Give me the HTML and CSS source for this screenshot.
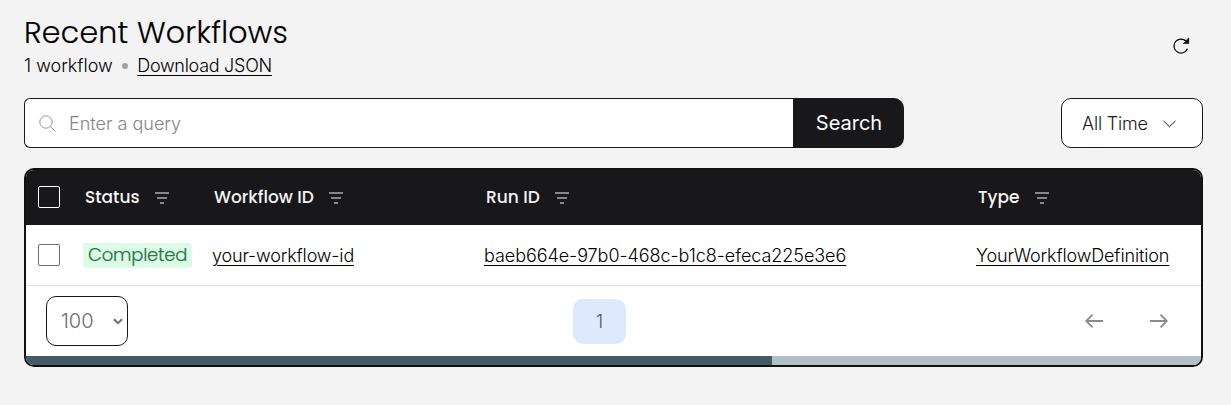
FILE: index.html
```html
<!DOCTYPE html>
<html lang="en">
<head>
<meta charset="utf-8">
<title>Recent Workflows</title>
<link rel="stylesheet" href="styles.css">
</head>
<body>
<svg class="defs" width="0" height="0">
  <symbol id="filter" viewBox="0 0 14 12"><path d="M0 1h14M2 6h10M5 11h4" stroke="currentColor" stroke-width="2"/></symbol>
</svg>
<main class="page">
  <header class="head">
    <div>
      <h1 class="title"><span>Recent Workflows</span></h1>
      <div class="sub"><span class="count">1 workflow</span><i class="dot"></i><a class="link download">Download JSON</a></div>
    </div>
    <button class="refresh" aria-label="Refresh"><svg width="18" height="18" viewBox="0 0 18 18"><path d="M15.4 11.8A7 7 0 1 1 14 4.2" fill="none" stroke="#000" stroke-width="1.2"/><path d="M16.8 1v5.6h-5.6l2.2-2.2-.8-1.2 1.5.2z" fill="#000" stroke="#000" stroke-width=".5"/></svg></button>
  </header>
  <div class="tools">
    <div class="field">
      <svg width="17" height="17" viewBox="0 0 17 17" fill="none" stroke="#96969c" stroke-width="1"><circle cx="7" cy="7" r="6.2"/><path d="M11.4 11.4l5 5"/></svg>
      <span class="placeholder">Enter a query</span>
    </div>
    <button class="search"><span>Search</span></button>
    <button class="time"><span>All Time</span><svg width="13" height="8" viewBox="0 0 13 8"><path d="M.5 1l6 5.7 6-5.7" fill="none" stroke="#18181b" stroke-width="1"/></svg></button>
  </div>
  <section class="table">
    <div class="row thead">
      <i class="box"></i>
      <div class="cell"><span class="status">Status</span><svg class="filter"><use href="#filter"/></svg></div>
      <div class="cell"><span class="wid">Workflow ID</span><svg class="filter"><use href="#filter"/></svg></div>
      <div class="cell"><span class="rid">Run ID</span><svg class="filter"><use href="#filter"/></svg></div>
      <div class="cell"><span class="type">Type</span><svg class="filter"><use href="#filter"/></svg></div>
    </div>
    <div class="row item">
      <i class="box"></i>
      <div class="cell"><span class="badge">Completed</span></div>
      <div class="cell"><a class="link id">your-workflow-id</a></div>
      <div class="cell"><a class="link run">baeb664e-97b0-468c-b1c8-efeca225e3e6</a></div>
      <div class="cell"><a class="link def">YourWorkflowDefinition</a></div>
    </div>
    <div class="foot">
      <div class="size"><span>100</span><svg width="10" height="7" viewBox="0 0 10 7"><path d="M1 1.2l4 4 4-4" fill="none" stroke="#6b6b73" stroke-width="2"/></svg></div>
      <span class="current">1</span>
      <div class="arrows">
        <svg width="18" height="14" viewBox="0 0 18 14"><path d="M18 7H1.2M7.5.7L1.2 7l6.3 6.3" fill="none" stroke="#8a8a8a" stroke-width="1.8"/></svg>
        <svg width="18" height="14" viewBox="0 0 18 14"><path d="M0 7h16.8M10.5.7L16.8 7l-6.3 6.3" fill="none" stroke="#8a8a8a" stroke-width="1.8"/></svg>
      </div>
    </div>
    <div class="track"><div class="thumb"></div></div>
  </section>
</main>
</body>
</html>
```
FILE: styles.css
```css
* { box-sizing: border-box; }
body { margin: 0; background: #f3f3f3; color: #000; font: 300 18px/24px Inter, "Liberation Sans", sans-serif; }
button { margin: 0; padding: 0; border: 0; background: none; font: inherit; color: inherit; }
svg { display: block; flex: none; }
.defs { display: none; }
.page { padding: 14px 28px 0 24px; }
.head { display: flex; justify-content: space-between; height: 84px; }
.title { margin: 0; font: 300 30px/38px Poppins, Inter, sans-serif; letter-spacing: .25px; -webkit-text-stroke: .2px #000; }
.sub { display: flex; align-items: center; height: 28px; }
.dot { width: 6px; height: 6px; margin: 0 10px 0 9px; border-radius: 50%; background: #a0a0a6; }
.link { text-decoration: underline; text-decoration-thickness: 1px; text-underline-offset: 3px; }
.download { margin-left: -.5px; letter-spacing: -.28px; }
.refresh { padding: 23px 13px 0 0; align-self: flex-start; }
.tools { display: flex; height: 50px; }
.field { display: flex; align-items: center; gap: 13px; width: 769px; padding-left: 14px; background: #fff; border: 1px solid #18181b; border-right: 0; border-radius: 6px 0 0 6px; color: #84848e; }
.placeholder { padding-top: 2px; }
.search { width: 111px; padding-left: 1px; background: #18181b; color: #fff; border-radius: 0 10px 10px 0; font-size: 20px; font-weight: 400; }
.time { display: flex; align-items: center; gap: 15px; width: 142px; margin-left: auto; padding: 2px 0 0 20px; background: #fff; border: 1px solid #18181b; border-radius: 10px; color: #18181b; letter-spacing: -.2px; }
.table { height: 199px; margin-top: 20px; border: 2px solid #111; border-radius: 10px; background: #fff; overflow: hidden; }
.row { display: grid; grid-template-columns: 57px 129px 272px 492px 1fr; align-items: center; }
.thead { height: 55px; padding: 0 0 2px 1px; background: #18181b; color: #f4f4f4; font: 500 17px/24px Poppins, Inter, sans-serif; }
.item { height: 61px; border-bottom: 1px solid #e2e2e4; }
.box { width: 22px; height: 22px; margin-left: 12px; border: 1px solid #6b6b73; border-radius: 2px; }
.thead .box { margin-left: 11px; border-color: #fff; }
.thead .cell { display: flex; align-items: center; gap: 15px; padding-left: 1px; }
.thead .filter { margin-top: 2px; }
.filter { width: 14px; height: 12px; color: #85858a; }
.badge { display: block; height: 25px; width: 109px; padding-left: 5px; border-radius: 3px; background: #dcfce7; color: #22783f; font: 300 18px/24px Poppins, Inter, sans-serif; letter-spacing: -.2px; -webkit-text-stroke: .2px #22783f; }
.item .link { display: block; padding-top: 1px; }
.id { letter-spacing: -.16px; }
.run { letter-spacing: -.06px; }
.def { letter-spacing: -.15px; }
.foot { display: grid; grid-template-columns: 1fr 53px 1fr; align-items: center; height: 70px; padding: 0 33px 0 20px; color: #52525b; }
.size { display: flex; align-items: center; justify-content: space-between; width: 82px; height: 50px; padding: 0 4px 0 14px; border: 1px solid #18181b; border-radius: 10px; color: #6b6b73; font-size: 20px; }
.current { height: 45px; margin-left: -7.5px; width: 53px; border-radius: 10px; background: #dfe9fe; text-align: center; line-height: 45px; }
.arrows { display: flex; justify-content: flex-end; gap: 47px; }
.track { height: 9px; background: #b0bec5; }
.thumb { width: 746px; height: 9px; background: #455a64; }
```
